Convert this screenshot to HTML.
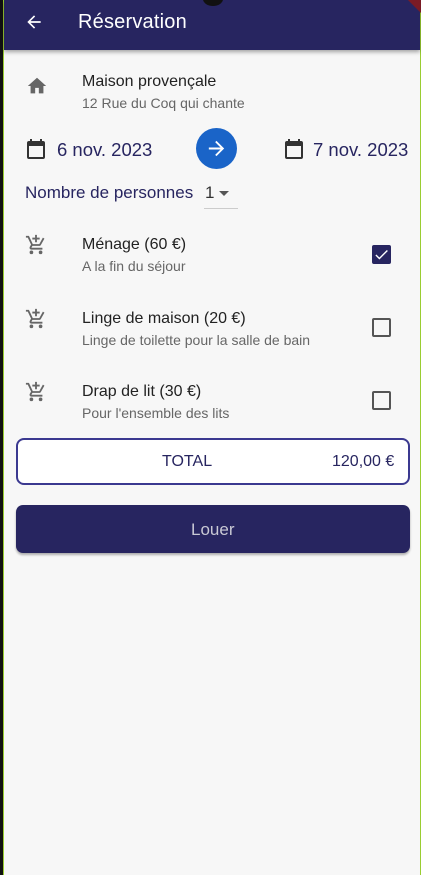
<!DOCTYPE html>
<html><head><style>
*{margin:0;padding:0;box-sizing:border-box}
body{width:421px;height:875px;background:#f7f7f7;font-family:"Liberation Sans",sans-serif;position:relative;overflow:hidden}
.lb{position:absolute;left:0;top:0;width:4px;height:875px;background:#111;border-right:1px solid #9acd32}
.rb{position:absolute;right:0;top:0;width:1px;height:875px;background:#9acd32}
.bar{position:absolute;left:4px;top:0;width:416px;height:50px;background:#272560;box-shadow:0 2px 4px rgba(0,0,0,.35)}
.t{position:absolute;color:#fff;font-size:20px;top:11px;letter-spacing:0.2px}
.abs{position:absolute}
.h1{font-size:16px;color:#222}
.h2{font-size:14px;color:#666}
.d{font-size:18.5px;color:#272560}
.cb{position:absolute;left:372px;width:19px;height:19px;border:2px solid #555;border-radius:2px}
</style></head><body>
<div class="lb"></div><div class="rb"></div>
<div class="bar">
<svg class="abs" style="left:20px;top:12px" width="20" height="20" viewBox="0 0 24 24"><path d="M20 11H7.8l5.6-5.6L12 4l-8 8 8 8 1.4-1.4L7.8 13H20z" fill="#fff"/></svg>
<div class="t" style="left:74px">Réservation</div>
<div class="abs" style="left:199px;top:-8px;width:20px;height:14px;border-radius:50%;background:#111"></div>
<div class="abs" style="right:-18px;top:-2px;width:40px;height:10px;background:#7a1b25;transform:rotate(45deg)"></div>
</div>
<svg class="abs" style="left:26px;top:75px" width="22" height="22" viewBox="0 0 24 24"><path d="M10 20v-6h4v6h5v-8h3L12 3 2 12h3v8z" fill="#666"/></svg>
<div class="abs h1" style="left:82px;top:73px">Maison provençale</div>
<div class="abs h2" style="left:82px;top:95px">12 Rue du Coq qui chante</div>
<svg class="abs" style="left:24px;top:136px" width="24" height="26" viewBox="0 0 24 24"><path d="M19 4h-1V2h-2v2H8V2H6v2H5a2 2 0 0 0-2 2v14a2 2 0 0 0 2 2h14a2 2 0 0 0 2-2V6a2 2 0 0 0-2-2zm0 16H5V9h14z" fill="#333"/></svg>
<div class="abs d" style="left:57px;top:139px">6 nov. 2023</div>
<div class="abs" style="left:196px;top:128px;width:41px;height:41px;border-radius:50%;background:#1a64c8"></div>
<svg class="abs" style="left:205px;top:137px" width="23" height="23" viewBox="0 0 24 24"><path d="M12 4l-1.4 1.4 5.6 5.6H4v2h12.2l-5.6 5.6L12 20l8-8z" fill="#fff"/></svg>
<svg class="abs" style="left:282px;top:136px" width="24" height="26" viewBox="0 0 24 24"><path d="M19 4h-1V2h-2v2H8V2H6v2H5a2 2 0 0 0-2 2v14a2 2 0 0 0 2 2h14a2 2 0 0 0 2-2V6a2 2 0 0 0-2-2zm0 16H5V9h14z" fill="#333"/></svg>
<div class="abs d" style="left:313px;top:139px">7 nov. 2023</div>
<div class="abs" style="left:25px;top:183px;font-size:17px;color:#272560">Nombre de personnes</div>
<div class="abs" style="left:205px;top:183px;font-size:17px;color:#333">1</div>
<div class="abs" style="left:219px;top:191px;border-left:5px solid transparent;border-right:5px solid transparent;border-top:5px solid #555"></div>
<div class="abs" style="left:204px;top:208px;width:34px;height:1px;background:#ccc"></div>

<svg class="abs" style="left:25px;top:234px" width="22" height="22" viewBox="0 0 24 24"><path d="M11 9h2V6h3V4h-3V1h-2v3H8v2h3zm-4 9a2 2 0 1 0 0 4 2 2 0 0 0 0-4zm10 0a2 2 0 1 0 0 4 2 2 0 0 0 0-4zM8.1 13h7.5c.7 0 1.4-.4 1.7-1l3.9-7-1.7-1-3.9 7H8.5L4.3 2H1v2h2l3.6 7.6L5.2 14c-.7 1.3.2 3 1.8 3h12v-2H7z" fill="#666"/></svg>
<div class="abs h1" style="left:82px;top:236px">Ménage (60 €)</div>
<div class="abs h2" style="left:82px;top:258px">A la fin du séjour</div>
<div class="cb" style="top:245px;background:#272560;border-color:#272560"></div>
<svg class="abs" style="left:373px;top:246px" width="17" height="17" viewBox="0 0 24 24"><path d="M9 16.2L4.8 12l-1.4 1.4L9 19 21 7l-1.4-1.4z" fill="#fff"/></svg>

<svg class="abs" style="left:25px;top:308px" width="22" height="22" viewBox="0 0 24 24"><path d="M11 9h2V6h3V4h-3V1h-2v3H8v2h3zm-4 9a2 2 0 1 0 0 4 2 2 0 0 0 0-4zm10 0a2 2 0 1 0 0 4 2 2 0 0 0 0-4zM8.1 13h7.5c.7 0 1.4-.4 1.7-1l3.9-7-1.7-1-3.9 7H8.5L4.3 2H1v2h2l3.6 7.6L5.2 14c-.7 1.3.2 3 1.8 3h12v-2H7z" fill="#666"/></svg>
<div class="abs h1" style="left:82px;top:310px">Linge de maison (20 €)</div>
<div class="abs h2" style="left:82px;top:332px">Linge de toilette pour la salle de bain</div>
<div class="cb" style="top:318px"></div>

<svg class="abs" style="left:25px;top:381px" width="22" height="22" viewBox="0 0 24 24"><path d="M11 9h2V6h3V4h-3V1h-2v3H8v2h3zm-4 9a2 2 0 1 0 0 4 2 2 0 0 0 0-4zm10 0a2 2 0 1 0 0 4 2 2 0 0 0 0-4zM8.1 13h7.5c.7 0 1.4-.4 1.7-1l3.9-7-1.7-1-3.9 7H8.5L4.3 2H1v2h2l3.6 7.6L5.2 14c-.7 1.3.2 3 1.8 3h12v-2H7z" fill="#666"/></svg>
<div class="abs h1" style="left:82px;top:383px">Drap de lit (30 €)</div>
<div class="abs h2" style="left:82px;top:405px">Pour l'ensemble des lits</div>
<div class="cb" style="top:391px"></div>

<div class="abs" style="left:16px;top:438px;width:394px;height:47px;background:#fff;border:2px solid #3b3990;border-radius:8px"></div>
<div class="abs" style="left:162px;top:453px;font-size:16px;color:#272560">TOTAL</div>
<div class="abs" style="left:332px;top:453px;font-size:16px;color:#272560">120,00 €</div>
<div class="abs" style="left:16px;top:505px;width:394px;height:48px;background:#272560;border-radius:7px;box-shadow:0 2px 2px rgba(0,0,0,.3)"></div>
<div class="abs" style="left:191px;top:520px;font-size:17px;color:#c8c8d4">Louer</div>
</body></html>
